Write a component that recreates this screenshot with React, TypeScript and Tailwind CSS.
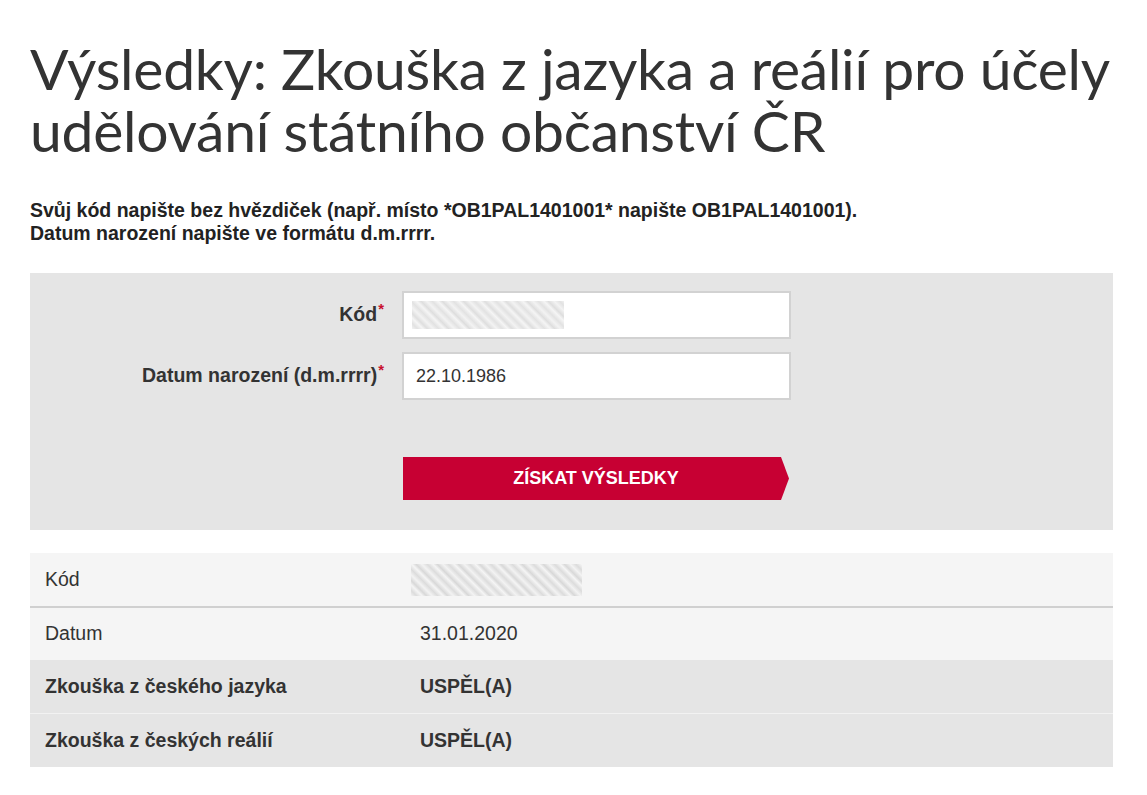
export default function App() {
  const rows = [
    { label: "Kód", value: null, bold: false, light: true, cls: "h-[55px] border-b-2 border-[#d0d0d0]" },
    { label: "Datum", value: "31.01.2020", bold: false, light: true, cls: "h-[52px]" },
    { label: "Zkouška z českého jazyka", value: "USPĚL(A)", bold: true, light: false, cls: "h-[54px] border-b border-[#f2f2f2]" },
    { label: "Zkouška z českých reálií", value: "USPĚL(A)", bold: true, light: false, cls: "h-[53px]" },
  ];

  return (
    <div className="w-[1147px] h-[795px] bg-white text-[#333] font-['Liberation_Sans',Arial,sans-serif]">
      <div className="w-[1083px] ml-[30px] pt-[37px]">
        <h1 className="font-['Lato','Open_Sans',sans-serif] text-[57px] leading-[62px] text-[#333] tracking-[-0.25px]">
          Výsledky: Zkouška z jazyka a reálií pro účely udělování státního občanství ČR
        </h1>

        <p className="mt-[38px] text-[19.5px] leading-[23px] font-bold text-[#222]">
          Svůj kód napište bez hvězdiček (např. místo *OB1PAL1401001* napište OB1PAL1401001).
          <br />
          Datum narození napište ve formátu d.m.rrrr.
        </p>

        <form className="mt-[28px] bg-[#e5e5e5] h-[257px] pt-[18px]">
          <div className="flex items-center h-[48px]">
            <label className="w-[354px] text-right text-[19.5px] font-bold">
              Kód<sup className="text-[#c8102e] text-[15px] ml-[1px]">*</sup>
            </label>
            <div className="ml-[18px] w-[389px] h-[48px] bg-white border-2 border-[#d2d2d2] flex items-center pl-[8px]">
              <div className="w-[152px] h-[28px] bg-[repeating-linear-gradient(45deg,#f3f3f3_0px,#e2e2e2_4px,#f5f5f5_8px,#dedede_11px,#f2f2f2_15px)]" />
            </div>
          </div>
          <div className="flex items-center h-[48px] mt-[13px]">
            <label className="w-[354px] text-right text-[19.5px] font-bold">
              Datum narození (d.m.rrrr)<sup className="text-[#c8102e] text-[15px] ml-[1px]">*</sup>
            </label>
            <div className="ml-[18px] w-[389px] h-[48px] bg-white border-2 border-[#d2d2d2] flex items-center pl-[12px] text-[18px] text-[#333]">
              22.10.1986
            </div>
          </div>
          <div className="flex mt-[57px]">
            <button
              type="button"
              className="ml-[373px] w-[386px] h-[43px] bg-[#c70033] text-white font-bold text-[18px] [clip-path:polygon(0_0,378px_0,386px_50%,378px_100%,0_100%)]"
            >
              ZÍSKAT VÝSLEDKY
            </button>
          </div>
        </form>

        <div className="mt-[23px]">
          {rows.map((r) => (
            <div
              key={r.label}
              className={`flex items-center ${r.light ? "bg-[#f5f5f5]" : "bg-[#e5e5e5]"} ${r.cls}`}
            >
              <div className={`w-[390px] pl-[15px] text-[19.5px] ${r.bold ? "font-bold" : ""}`}>{r.label}</div>
              {r.value ? (
                <div className={`text-[19.5px] ${r.bold ? "font-bold" : ""}`}>{r.value}</div>
              ) : (
                <div className="-ml-[9px] w-[171px] h-[32px] bg-[repeating-linear-gradient(45deg,#f3f3f3_0px,#dcdcdc_4px,#f5f5f5_8px,#d8d8d8_11px,#f2f2f2_15px)]" />
              )}
            </div>
          ))}
        </div>
      </div>
    </div>
  );
}
